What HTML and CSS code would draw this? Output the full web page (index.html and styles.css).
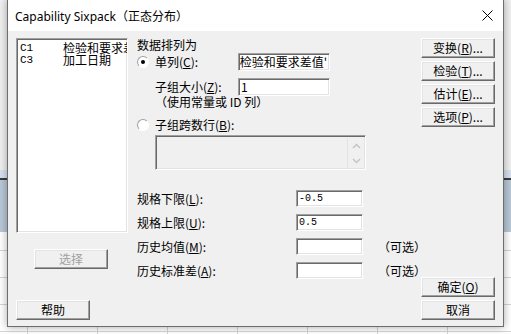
FILE: index.html
```html
<!DOCTYPE html>
<html>
<head>
    <link rel="stylesheet" href="styles.css">
</head>
<body>
    <div class="desk">
        <!-- Dialog window -->
        <div class="dialog">
            <div class="titlebar">
                <span class="title">Capability Sixpack（正态分布）</span>
                <svg class="close" width="11" height="11" viewBox="0 0 11 11">
                    <path d="M0.5 0.5L10.5 10.5M10.5 0.5L0.5 10.5" stroke="#000" stroke-width="1" fill="none"/>
                </svg>
            </div>

            <div class="body">
                <!-- Column list -->
                <div class="col-left">
                    <div class="listbox">
                        <div class="item"><span class="cid">C1</span><span>检验和要求差值</span></div>
                        <div class="item"><span class="cid">C3</span><span>加工日期</span></div>
                    </div>
                    <button class="btn btn-select" disabled>选择</button>
                    <button class="btn btn-help">帮助</button>
                </div>

                <!-- Form -->
                <div class="col-mid">
                    <div class="heading">数据排列为</div>
                    <div class="opt opt-1">
                        <span class="radio on"></span>
                        <span class="lbl">单列(<u>C</u>):</span>
                        <div class="field field-wide field-scroll"><span>'检验和要求差值'</span></div>
                    </div>
                    <div class="opt row-size indent">
                        <span class="lbl">子组大小(<u>Z</u>):</span>
                        <div class="field field-wide">1</div>
                    </div>
                    <div class="note indent">（使用常量或 ID 列）</div>
                    <div class="opt opt-2">
                        <span class="radio"></span>
                        <span>子组跨数行(<u>B</u>):</span>
                    </div>
                    <div class="multibox">
                        <div class="scroll">
                            <svg width="9" height="6" viewBox="0 0 9 6"><path d="M1 5L4.5 1.5L8 5" stroke="#c4c4c4" stroke-width="1.5" fill="none"/></svg>
                            <svg width="9" height="6" viewBox="0 0 9 6"><path d="M1 1L4.5 4.5L8 1" stroke="#c4c4c4" stroke-width="1.5" fill="none"/></svg>
                        </div>
                    </div>

                    <div class="spec spec-first">
                        <span class="lbl">规格下限(<u>L</u>):</span>
                        <div class="field field-num">-0.5</div>
                    </div>
                    <div class="spec">
                        <span class="lbl">规格上限(<u>U</u>):</span>
                        <div class="field field-num">0.5</div>
                    </div>
                    <div class="spec">
                        <span class="lbl">历史均值(<u>M</u>):</span>
                        <div class="field field-num"></div>
                        <span class="hint">（可选）</span>
                    </div>
                    <div class="spec">
                        <span class="lbl">历史标准差(<u>A</u>):</span>
                        <div class="field field-num"></div>
                        <span class="hint">（可选）</span>
                    </div>
                </div>

                <!-- Side buttons -->
                <div class="col-right">
                    <button class="btn">变换(<u>R</u>)...</button>
                    <button class="btn">检验(<u>T</u>)...</button>
                    <button class="btn">估计(<u>E</u>)...</button>
                    <button class="btn">选项(<u>P</u>)...</button>
                    <button class="btn btn-ok">确定(<u>O</u>)</button>
                    <button class="btn">取消</button>
                </div>
            </div>
        </div>
    </div>
</body>
</html>
```

FILE: styles.css
```css
* {
    box-sizing: border-box;
}

body {
    margin: 0;
    width: 511px;
    height: 334px;
    overflow: hidden;
    font-family: "Noto Sans CJK SC", sans-serif;
    font-size: 12px;
    color: #000;
}

/* Spreadsheet behind the dialog */
.desk {
    position: relative;
    width: 511px;
    height: 334px;
    background-color: #fff;
    background-image:
        linear-gradient(#f0f0f0, #f0f0f0),
        linear-gradient(#d7e2ee, #d7e2ee),
        linear-gradient(#3a3a3a, #3a3a3a),
        linear-gradient(#b9c8d7, #b9c8d7),
        linear-gradient(to right, #d4d4d4 1px, transparent 1px),
        linear-gradient(#d4d4d4 1px, transparent 1px);
    background-position: 0 0, 0 170px, 0 178px, 0 180px, 27px 0, 0 250px;
    background-size: 100% 170px, 100% 8px, 100% 2px, 100% 52px, 70px 100%, 100% 27px;
    background-repeat: no-repeat, no-repeat, no-repeat, no-repeat, repeat-x, repeat-y;
}

.dialog {
    position: absolute;
    left: 7px;
    top: -1px;
    width: 497px;
    height: 328px;
    border: 1px solid #6e6e6e;
    background: #f0f0f0;
    box-shadow: 0 0 8px rgba(0,0,0,0.35);
    display: flex;
    flex-direction: column;
}

.titlebar {
    height: 31px;
    flex: none;
    background: #fff;
    display: flex;
    align-items: center;
    justify-content: space-between;
    padding: 0 10px 0 7px;
}

.title {
    font-family: "Noto Sans", "Noto Sans CJK SC", sans-serif;
    font-size: 12px;
}

.body {
    flex: 1;
    display: flex;
    padding: 7px 8px 6px 8px;
}

/* Shared 3D borders */
.btn {
    width: 74px;
    height: 20px;
    padding: 0;
    background: #f0f0f0;
    border: 1px solid;
    border-color: #fff #696969 #696969 #fff;
    box-shadow: inset -1px -1px #a0a0a0, inset 1px 1px #e3e3e3;
    font: inherit;
    line-height: 16px;
    color: #000;
}

.btn:disabled {
    color: #a0a0a0;
}

.field, .listbox, .multibox {
    border: 1px solid;
    border-color: #a0a0a0 #fff #fff #a0a0a0;
    box-shadow: inset 1px 1px #696969, inset -1px -1px #e3e3e3;
}

/* Left column */
.col-left {
    width: 112px;
    flex: none;
    display: flex;
    flex-direction: column;
}

.listbox {
    height: 195px;
    background: #fff;
    padding: 3px 2px;
    overflow: hidden;
}

.item {
    display: flex;
    height: 12px;
    line-height: 12px;
    white-space: nowrap;
}

.cid {
    width: 44px;
    flex: none;
    padding-left: 1px;
    font-family: "Liberation Mono", monospace;
    font-size: 11px;
}

.btn-select {
    margin: 16px 0 0 18px;
}

.btn-help {
    margin-top: auto;
}

/* Middle column */
.col-mid {
    width: 284px;
    flex: none;
    margin-left: 9px;
    display: flex;
    flex-direction: column;
    line-height: 14px;
}

.heading {
    height: 14px;
}

.opt {
    display: flex;
    align-items: center;
    white-space: nowrap;
}

.opt-1 {
    margin-top: 1px;
    height: 18px;
}

.opt-2 {
    margin-top: 10px;
    height: 14px;
}

.row-size {
    margin-top: 7px;
    height: 18px;
}

.indent {
    padding-left: 18px;
}

.note {
    height: 12px;
    line-height: 12px;
    white-space: nowrap;
}

.radio {
    position: relative;
    width: 12px;
    height: 12px;
    flex: none;
    margin-right: 6px;
    border-radius: 50%;
    background: #fff;
    border: 1px solid;
    border-color: #a0a0a0 #fff #fff #a0a0a0;
}

.radio.on::after {
    content: "";
    position: absolute;
    left: 3px;
    top: 3px;
    width: 4px;
    height: 4px;
    border-radius: 50%;
    background: #000;
}

.lbl {
    width: 83px;
    flex: none;
}

.field {
    flex: none;
    background: #fff;
    display: flex;
    align-items: center;
    padding: 0 2px;
    overflow: hidden;
    white-space: nowrap;
}

.field-wide {
    width: 92px;
    height: 18px;
}

.field-scroll {
    justify-content: flex-end;
}

.multibox {
    margin: 3px 0 0 18px;
    width: 211px;
    height: 35px;
    background: #f0f0f0;
    display: flex;
    justify-content: flex-end;
    padding: 2px 1px 1px 2px;
}

.scroll {
    width: 17px;
    border-left: 1px solid #e3e3e3;
    display: flex;
    flex-direction: column;
    justify-content: space-around;
    align-items: center;
}

.spec {
    display: flex;
    align-items: center;
    height: 17px;
    margin-top: 7px;
    white-space: nowrap;
}

.spec-first {
    margin-top: 20px;
}

.spec .lbl {
    width: 159px;
}

.field-num {
    width: 67px;
    height: 17px;
    font-family: "Liberation Mono", monospace;
    font-size: 10px;
}

.hint {
    flex: none;
    margin-left: 15px;
}

/* Right column */
.col-right {
    width: 74px;
    flex: none;
    display: flex;
    flex-direction: column;
    gap: 3px;
}

.btn-ok {
    margin-top: auto;
}
```
